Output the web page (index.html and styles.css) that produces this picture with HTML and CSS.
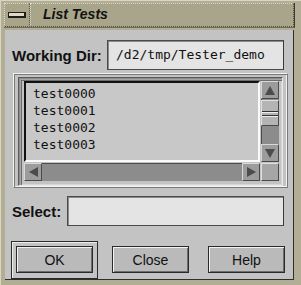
FILE: index.html
```html
<!DOCTYPE html>
<html lang="en">
<head>
    <meta charset="UTF-8">
    <title>List Tests</title>
    <link rel="stylesheet" href="styles.css">
</head>
<body>
    <div class="window">
        <!-- Title bar -->
        <div class="titlebar">
            <div class="menu-btn"><span class="menu-bar"></span></div>
            <div class="title">List Tests</div>
        </div>

        <div class="content">
            <div class="row dir-row">
                <span class="label">Working Dir:</span>
                <div class="field dir-field">/d2/tmp/Tester_demo</div>
            </div>

            <!-- Scrolled list -->
            <div class="list-frame">
                <div class="list-grid">
                    <div class="list">
                        <div class="item">test0000</div>
                        <div class="item">test0001</div>
                        <div class="item">test0002</div>
                        <div class="item">test0003</div>
                    </div>
                    <div class="vscroll">
                        <div class="arrow"><span class="tri tri-up"></span></div>
                        <div class="thumb">
                            <span class="grip"></span>
                            <span class="grip"></span>
                        </div>
                        <div class="trough"></div>
                        <div class="arrow"><span class="tri tri-down"></span></div>
                    </div>
                    <div class="hscroll">
                        <div class="arrow"><span class="tri tri-left"></span></div>
                        <div class="trough"></div>
                        <div class="arrow"><span class="tri tri-right"></span></div>
                    </div>
                    <div class="corner"></div>
                </div>
            </div>

            <div class="row select-row">
                <span class="label">Select:</span>
                <div class="field select-field"></div>
            </div>

            <div class="buttons">
                <div class="default-ring"><button class="btn">OK</button></div>
                <button class="btn btn-close">Close</button>
                <button class="btn btn-help">Help</button>
            </div>
        </div>
    </div>
</body>
</html>
```

FILE: styles.css
```css
/* Page */
body {
    margin: 0;
    background-color: #b2ae95;
    font-family: "Liberation Sans", Arial, sans-serif;
}

/* Window frame */
.window {
    width: 301px;
    height: 285px;
    box-sizing: border-box;
    padding: 3px 6px 4px 4px;
    background-color: #b2ae95;
    border-top: 1px solid #d8d5c2;
    border-left: 1px solid #d8d5c2;
    display: flex;
    flex-direction: column;
}

.titlebar {
    height: 25px;
    box-sizing: border-box;
    display: flex;
    background-color: #a9a58a;
    border-right: 1px solid #3a3a30;
    border-bottom: 1px solid #6e6b58;
    margin-top: -1px;
    margin-left: -1px;
}

.menu-btn {
    width: 24px;
    border: 1px dotted #dcd9c6;
    border-right-color: #55523f;
    border-bottom-color: #55523f;
    display: flex;
    align-items: center;
    justify-content: center;
}

.menu-bar {
    width: 15px;
    height: 3px;
    background-color: #dcd9c6;
    border: 1px solid #1e1e1a;
    border-right-width: 2px;
    border-bottom-width: 2px;
}

.title {
    flex: 1;
    border: 1px dotted #dcd9c6;
    border-right-color: #55523f;
    border-bottom-color: #55523f;
    padding-left: 12px;
    font-size: 14px;
    font-weight: bold;
    font-style: italic;
    line-height: 21px;
    color: #111;
}

/* Dialog body */
.content {
    width: 289px;
    height: 250px;
    box-sizing: border-box;
    margin-top: 2px;
    background-color: #c3c3c3;
    border-right: 1px solid #2e2e2e;
    border-bottom: 1px solid #2e2e2e;
    padding: 0 9px 0 7px;
    display: flex;
    flex-direction: column;
    align-items: flex-start;
}

.row {
    width: 100%;
    height: 30px;
    display: flex;
    align-items: center;
}

.dir-row {
    margin-top: 10px;
}

.label {
    font-size: 15px;
    font-weight: bold;
    color: #111;
}

.field {
    margin-left: auto;
    height: 30px;
    box-sizing: border-box;
    background-color: #e4e4e4;
    border: 1px solid #4a4a4a;
    border-right-color: #3a3a3a;
    box-shadow: inset 1px 1px 0 #8a8a8a;
    font-family: "DejaVu Sans Mono", "Liberation Mono", monospace;
    font-size: 13px;
    line-height: 28px;
    padding-left: 8px;
    color: #111;
}

.dir-field {
    width: 177px;
}

.select-field {
    width: 217px;
}

/* Scrolled list */
.list-frame {
    width: 275px;
    height: 115px;
    box-sizing: border-box;
    margin-top: 3px;
    margin-left: 1px;
    padding: 3px 4px 3px 4px;
    border: 1px solid;
    border-color: #f2f2f2 #7a7a7a #7a7a7a #f2f2f2;
    box-shadow: inset 1px 1px 0 #7a7a7a, inset -1px -1px 0 #f2f2f2;
}

.list-grid {
    padding: 3px 5px 4px 5px;
    border: 1px solid;
    border-color: #5c5c5c #e8e8e8 #e8e8e8 #5c5c5c;
    box-shadow: inset 1px 1px 0 #8c8c8c, inset 2px 2px 0 #a6a6a6, inset 3px 3px 0 #6c6c6c,
                inset -1px -1px 0 #d6d6d6;
    display: grid;
    grid-template-columns: 236px 18px;
    grid-template-rows: 81px 18px;
    column-gap: 1px;
    row-gap: 1px;
}

.list {
    box-sizing: border-box;
    background-color: #c8c8c8;
    border-top: 2px solid #111;
    border-left: 2px solid #111;
    border-right: 2px solid #fafafa;
    border-bottom: 2px solid #fafafa;
    padding: 2px 0 0 7px;
    font-family: "DejaVu Sans Mono", "Liberation Mono", monospace;
    font-size: 13px;
    line-height: 17px;
    color: #111;
}

/* Scrollbars */
.vscroll, .hscroll {
    display: flex;
    background-color: #8c8c8c;
    box-shadow: inset 1px 1px 0 #4a4a4a;
}

.vscroll {
    flex-direction: column;
}

.arrow {
    width: 18px;
    height: 18px;
    box-sizing: border-box;
    background-color: #9c9c9c;
    border: 1px solid;
    border-color: #d8d8d8 #4a4a4a #4a4a4a #d8d8d8;
    display: flex;
    align-items: center;
    justify-content: center;
    flex-shrink: 0;
}

.tri {
    width: 0;
    height: 0;
    border: 5px solid transparent;
}

.tri-up {
    border-bottom: 9px solid #4c4c4c;
    border-top-width: 0;
}

.tri-down {
    border-top: 9px solid #4c4c4c;
    border-bottom-width: 0;
}

.tri-left {
    border-right: 9px solid #4c4c4c;
    border-left-width: 0;
}

.tri-right {
    border-left: 9px solid #4c4c4c;
    border-right-width: 0;
}

.thumb {
    height: 26px;
    margin-top: 1px;
    box-sizing: border-box;
    background-color: #b4b4b4;
    border: 1px solid;
    border-color: #e0e0e0 #4a4a4a #4a4a4a #e0e0e0;
    display: flex;
    flex-direction: column;
    justify-content: center;
    gap: 3px;
}

.grip {
    height: 1px;
    background-color: #333;
    box-shadow: 0 1px 0 #eee;
}

.trough {
    flex: 1;
}

.corner {
    background-color: #a6a6a6;
    border: 1px solid;
    border-color: #e0e0e0 #4a4a4a #4a4a4a #e0e0e0;
}

.select-row {
    margin-top: 8px;
}

/* Buttons */
.buttons {
    margin-top: 15px;
    margin-left: -1px;
    display: flex;
    align-items: flex-start;
}

.default-ring {
    width: 87px;
    height: 38px;
    box-sizing: border-box;
    padding: 4px 0 0 4px;
    border: 1px solid #2a2a2a;
    box-shadow: inset 1px 1px 0 #efefef;
}

.btn {
    width: 77px;
    height: 27px;
    background-color: #bababa;
    border: 1px solid #2a2a2a;
    box-shadow: inset 1px 1px 0 #f2f2f2, inset -1px -1px 0 #6e6e6e;
    font-family: "Liberation Sans", Arial, sans-serif;
    font-size: 14px;
    color: #111;
    padding: 0;
}

.btn-close {
    margin-top: 5px;
    margin-left: 14px;
}

.btn-help {
    margin-top: 5px;
    margin-left: 19px;
}
```
